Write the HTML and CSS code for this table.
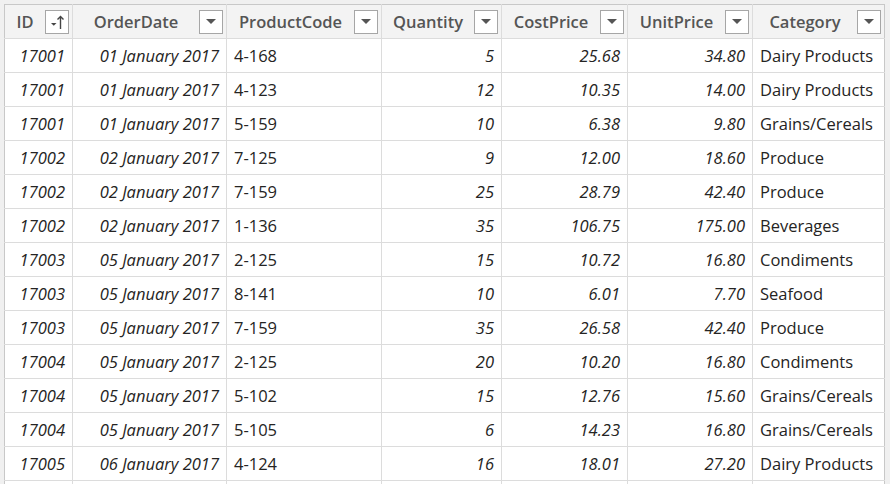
FILE: index.html
```html
<!DOCTYPE html>
<html>
<head>
<meta charset="utf-8">
<link rel="stylesheet" href="styles.css">
</head>
<body>
<div class="frame">
<table class="grid">
<colgroup>
<col class="c-id"><col class="c-date"><col class="c-code"><col class="c-qty"><col class="c-cost"><col class="c-unit"><col class="c-cat">
</colgroup>
<thead>
<tr>
<th><div class="hd"><span class="lbl">ID</span><span class="btn sort"><svg width="18" height="18" viewBox="0 0 18 18"><path d="M3 10h5.5l-2.75 2.75z" fill="#444"/><path d="M12.5 16V3.5M9.5 6.5l3-3 3 3" stroke="#444" stroke-width="1.4" fill="none"/></svg></span></div></th>
<th><div class="hd"><span class="lbl">OrderDate</span><span class="btn"><i class="tri"></i></span></div></th>
<th><div class="hd"><span class="lbl">ProductCode</span><span class="btn"><i class="tri"></i></span></div></th>
<th><div class="hd"><span class="lbl">Quantity</span><span class="btn"><i class="tri"></i></span></div></th>
<th><div class="hd"><span class="lbl">CostPrice</span><span class="btn"><i class="tri"></i></span></div></th>
<th><div class="hd"><span class="lbl">UnitPrice</span><span class="btn"><i class="tri"></i></span></div></th>
<th><div class="hd"><span class="lbl">Category</span><span class="btn"><i class="tri"></i></span></div></th>
</tr>
</thead>
<tbody>
<tr><td class="num">17001</td><td class="num">01 January 2017</td><td>4-168</td><td class="num">5</td><td class="num">25.68</td><td class="num">34.80</td><td>Dairy Products</td></tr>
<tr><td class="num">17001</td><td class="num">01 January 2017</td><td>4-123</td><td class="num">12</td><td class="num">10.35</td><td class="num">14.00</td><td>Dairy Products</td></tr>
<tr><td class="num">17001</td><td class="num">01 January 2017</td><td>5-159</td><td class="num">10</td><td class="num">6.38</td><td class="num">9.80</td><td>Grains/Cereals</td></tr>
<tr><td class="num">17002</td><td class="num">02 January 2017</td><td>7-125</td><td class="num">9</td><td class="num">12.00</td><td class="num">18.60</td><td>Produce</td></tr>
<tr><td class="num">17002</td><td class="num">02 January 2017</td><td>7-159</td><td class="num">25</td><td class="num">28.79</td><td class="num">42.40</td><td>Produce</td></tr>
<tr><td class="num">17002</td><td class="num">02 January 2017</td><td>1-136</td><td class="num">35</td><td class="num">106.75</td><td class="num">175.00</td><td>Beverages</td></tr>
<tr><td class="num">17003</td><td class="num">05 January 2017</td><td>2-125</td><td class="num">15</td><td class="num">10.72</td><td class="num">16.80</td><td>Condiments</td></tr>
<tr><td class="num">17003</td><td class="num">05 January 2017</td><td>8-141</td><td class="num">10</td><td class="num">6.01</td><td class="num">7.70</td><td>Seafood</td></tr>
<tr><td class="num">17003</td><td class="num">05 January 2017</td><td>7-159</td><td class="num">35</td><td class="num">26.58</td><td class="num">42.40</td><td>Produce</td></tr>
<tr><td class="num">17004</td><td class="num">05 January 2017</td><td>2-125</td><td class="num">20</td><td class="num">10.20</td><td class="num">16.80</td><td>Condiments</td></tr>
<tr><td class="num">17004</td><td class="num">05 January 2017</td><td>5-102</td><td class="num">15</td><td class="num">12.76</td><td class="num">15.60</td><td>Grains/Cereals</td></tr>
<tr><td class="num">17004</td><td class="num">05 January 2017</td><td>5-105</td><td class="num">6</td><td class="num">14.23</td><td class="num">16.80</td><td>Grains/Cereals</td></tr>
<tr><td class="num">17005</td><td class="num">06 January 2017</td><td>4-124</td><td class="num">16</td><td class="num">18.01</td><td class="num">27.20</td><td>Dairy Products</td></tr>
<tr class="stub"><td></td><td></td><td></td><td></td><td></td><td></td><td></td></tr>
</tbody>
</table>
</div>
</body>
</html>
```
FILE: styles.css
```css
html, body {
  margin: 0;
  padding: 0;
  background: #f0f0f0;
  overflow: hidden;
  height: 484px;
}
.frame {
  padding: 4px 0 0 4px;
  width: 886px;
}
.grid {
  border-collapse: collapse;
  table-layout: fixed;
  width: 880px;
  font-family: "Open Sans", "Noto Sans", sans-serif;
  font-size: 16.5px;
  color: #252423;
  background: #fff;
  border: 1px solid #c8c8c8;
}
.c-id { width: 68px; }
.c-date { width: 154px; }
.c-code { width: 155px; }
.c-qty { width: 120px; }
.c-cost { width: 126px; }
.c-unit { width: 125px; }
.c-cat { width: 132px; }
th {
  background: #f3f3f3;
  border: 1px solid #dcdcdc;
  border-top-color: #c8c8c8;
  height: 33px;
  padding: 0 3px 0 0;
  font-weight: 600;
  color: #555;
  text-align: left;
}
th:first-child { border-left-color: #c8c8c8; }
th:last-child { border-right-color: #c8c8c8; }
.hd {
  display: flex;
  align-items: center;
  height: 33px;
}
.lbl {
  flex: 1;
  text-align: center;
  white-space: nowrap;
  overflow: hidden;
}
.btn {
  width: 22px;
  height: 22px;
  border: 1px solid #a6a6a6;
  background: #fff;
  display: flex;
  align-items: center;
  justify-content: center;
  flex: none;
}
.tri {
  display: block;
  width: 0;
  height: 0;
  border-left: 5px solid transparent;
  border-right: 5px solid transparent;
  border-top: 5px solid #555;
}
td {
  border: 1px solid #dcdcdc;
  height: 33px;
  padding: 0 7px;
  white-space: nowrap;
  overflow: hidden;
}
td:first-child { border-left-color: #c8c8c8; }
td:last-child { border-right-color: #c8c8c8; }
td.num {
  font-style: italic;
  text-align: right;
}
```
